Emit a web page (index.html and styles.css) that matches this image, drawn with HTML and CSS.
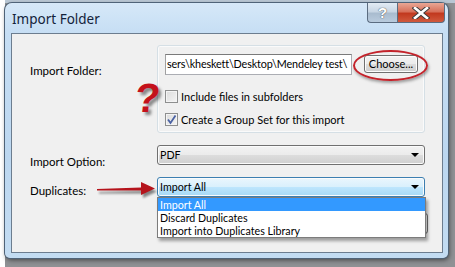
FILE: index.html
```html
<!DOCTYPE html>
<html>
<head>
<meta charset="utf-8">
<link rel="stylesheet" href="styles.css">
</head>
<body>
<div class="desk">
  <div class="window">
    <div class="titlebar">
      <span class="title">Import Folder</span>
      <div class="caption-btns">
        <div class="cbtn help">?</div>
        <div class="cbtn close">
          <svg width="18" height="12" viewBox="0 0 18 12"><path d="M3 1 L15 11 M15 1 L3 11" stroke="#3a3a3a" stroke-width="4.5" stroke-linecap="square"/><path d="M3 1 L15 11 M15 1 L3 11" stroke="#fff" stroke-width="2.6" stroke-linecap="square"/></svg>
        </div>
      </div>
    </div>
    <div class="client">
      <div class="row row-folder">
        <div class="label lbl-folder">Import Folder:</div>
        <div class="group">
          <span class="qmark">?</span>
          <div class="path-row">
            <div class="field">sers\kheskett\Desktop\Mendeley test\</div>
            <div class="choose-wrap">
              <div class="btn choose">Choose...</div>
              <div class="ring"></div>
            </div>
          </div>
          <label class="check first"><span class="box"></span>Include files in subfolders</label>
          <label class="check second"><span class="box checked"><svg width="11" height="11" viewBox="0 0 11 11"><path d="M2 5.5 L4.5 9 L9.5 1.5" fill="none" stroke="#4b62a3" stroke-width="1.8"/></svg></span>Create a Group Set for this import</label>
        </div>
      </div>
      <div class="row row-option">
        <div class="label lbl-option">Import Option:</div>
        <div class="combo"><span>PDF</span><span class="arrow"></span></div>
      </div>
      <div class="row row-dup">
        <div class="label lbl-dup">Duplicates:</div>
        <div class="combo active"><span>Import All</span><span class="arrow"></span>
          <svg class="red-arrow" width="64" height="22" viewBox="0 0 64 22"><defs><filter id="sh" x="-10%" y="-30%" width="130%" height="180%"><feGaussianBlur stdDeviation="1.2"/></filter></defs><g transform="translate(2,3)" opacity="0.45" filter="url(#sh)"><path d="M0 10 L44 8.5 L44 3 L58 9.5 L44 16 L44 11.5 L0 11.5 Z" fill="#000"/></g><path d="M0 10 L44 8.5 L44 3 L58 9.5 L44 16 L44 11.5 L0 11.5 Z" fill="#b5141c"/></svg>
          <ul class="list">
            <li class="sel">Import All</li>
            <li>Discard Duplicates</li>
            <li>Import into Duplicates Library</li>
          </ul>
        </div>
      </div>
      <div class="row row-buttons">
        <div class="btn ok"></div>
      </div>
    </div>
  </div>
</div>
</body>
</html>
```

FILE: styles.css
```css
html, body {
  margin: 0;
  padding: 0;
}
body {
  width: 455px;
  height: 267px;
  overflow: hidden;
  background: linear-gradient(to right, #ffffff 0 5px, transparent 5px), linear-gradient(to bottom, #b9c7d4 0 3px, #8f9194 3px);
  font-family: Lato, "Noto Sans", sans-serif;
  font-size: 11.5px;
  color: #000;
}
.desk {
  padding: 3px 0 0 5px;
}
.window {
  width: 443px;
  height: 255px;
  box-sizing: border-box;
  padding: 0 5px 5px 6px;
  border-radius: 7px 7px 5px 5px;
  background: linear-gradient(to bottom, #d6e8f8 0, #c6def4 30px, #bcd7f0 60%, #c3dcf2 100%);
  box-shadow: 0 0 0 1px #4f6378, 1px 2px 5px rgba(0,0,0,0.55);
  display: flex;
  flex-direction: column;
}
.titlebar {
  height: 30px;
  display: flex;
  justify-content: space-between;
  align-items: flex-start;
  flex: none;
}
.title {
  font-family: "Noto Sans", sans-serif;
  font-size: 13.5px;
  color: #13223a;
  padding: 7px 0 0 1px;
  line-height: 18px;
}
.caption-btns {
  display: flex;
  margin-right: -2px;
}
.cbtn {
  height: 20px;
  box-sizing: border-box;
  border: 1px solid #5b6c80;
  border-top: none;
  display: flex;
  align-items: center;
  justify-content: center;
}
.help {
  width: 30px;
  border-radius: 0 0 0 4px;
  border-right: none;
  background: linear-gradient(to bottom, #e2ebf4 0, #c8d6e4 45%, #a9bccf 55%, #b9cbdd 100%);
  color: #fff;
  font-family: "Liberation Sans", sans-serif;
  font-weight: bold;
  font-size: 15px;
  text-shadow: 0 0 1px #555, 0 0 1px #555;
}
.close {
  width: 48px;
  border-radius: 0 0 4px 0;
  background: linear-gradient(to bottom, #e9a795 0, #d7715b 45%, #c2391f 55%, #d0593d 100%);
}
.client {
  flex: 1;
  background: #f0f0f0;
  border: 1px solid #6c7d8f;
  padding: 11px 17px 0 18px;
  position: relative;
}
.row {
  display: flex;
  align-items: flex-start;
}
.label {
  width: 127px;
  flex: none;
  line-height: 16px;
  color: #000;
}
.lbl-folder { padding-top: 18px; }
.lbl-option { padding-top: 9px; margin-bottom: -5px; }
.lbl-dup { padding-top: 6px; margin-bottom: -2px; }
.group {
  width: 268px;
  box-sizing: border-box;
  border: 1px solid #d5dfe5;
  border-radius: 3px;
  box-shadow: inset 0 0 0 1px #fafafa;
  padding: 8px 6px 6px 7px;
  position: relative;
}
.qmark {
  position: absolute;
  left: -23px;
  top: 34px;
  font-family: "Liberation Sans", sans-serif;
  font-weight: bold;
  font-size: 41px;
  line-height: 36px;
  color: #c4111b;
  transform: skewX(-6deg);
  text-shadow: 3px 3px 3px rgba(0,0,0,0.45);
}
.path-row {
  display: flex;
  align-items: flex-start;
  gap: 12px;
}
.field {
  width: 187px;
  height: 21px;
  flex: none;
  box-sizing: border-box;
  background: #fff;
  border: 1px solid #abadb3;
  border-top-color: #7a7a7a;
  border-left-color: #a0a0a0;
  line-height: 18px;
  padding-left: 1px;
  font-size: 10.8px;
  letter-spacing: -0.15px;
  white-space: nowrap;
  overflow: hidden;
}
.choose-wrap {
  position: relative;
  margin-top: 1px;
}
.btn {
  box-sizing: border-box;
  border: 1px solid #707070;
  border-radius: 3px;
  background: linear-gradient(to bottom, #f2f2f2 0, #ebebeb 50%, #dddddd 50%, #cfcfcf 100%);
  box-shadow: inset 0 0 0 1px #fcfcfc;
  text-align: center;
}
.choose {
  width: 54px;
  height: 18px;
  line-height: 16px;
  font-size: 11px;
}
.ring {
  position: absolute;
  left: -11px;
  top: -5px;
  width: 75px;
  height: 31px;
  box-sizing: border-box;
  border: 2px solid #c3232b;
  border-radius: 50%;
  box-shadow: 1px 2px 3px rgba(0,0,0,0.35);
}
.check {
  display: flex;
  align-items: center;
  height: 13px;
  line-height: 13px;
  font-size: 11px;
}
.check.first { margin-top: 15px; }
.check.second { margin-top: 10px; }
.box {
  width: 13px;
  height: 13px;
  box-sizing: border-box;
  border: 1px solid #8e8f8f;
  background: linear-gradient(135deg, #dcdcdc 0, #f4f4f4 100%);
  box-shadow: inset 0 0 0 1px #f4f4f4;
  margin-right: 3px;
  flex: none;
  display: flex;
  align-items: center;
  justify-content: center;
}
.row-option { margin-top: 12px; }
.row-dup { margin-top: 12px; }
.combo {
  width: 268px;
  height: 20px;
  box-sizing: border-box;
  border: 1px solid #707070;
  border-radius: 3px;
  background: linear-gradient(to bottom, #f2f2f2 0, #ebebeb 50%, #dddddd 50%, #cfcfcf 100%);
  box-shadow: inset 0 0 0 1px #fbfbfb;
  display: flex;
  align-items: center;
  justify-content: space-between;
  padding: 0 5px 0 2px;
  line-height: 16px;
  font-size: 10.7px;
  position: relative;
}
.combo.active {
  border-color: #3c7fb1;
  background: linear-gradient(to bottom, #eaf6fd 0, #d9f0fc 50%, #bee6fd 50%, #a7d9f5 100%);
  z-index: 2;
}
.arrow {
  width: 0;
  height: 0;
  border-left: 4px solid transparent;
  border-right: 4px solid transparent;
  border-top: 4px solid #000;
}
.red-arrow {
  position: absolute;
  left: -61px;
  top: 1px;
}
.list {
  position: absolute;
  left: -1px;
  top: 19px;
  width: 269px;
  box-sizing: border-box;
  margin: 0;
  padding: 0;
  list-style: none;
  background: #fff;
  border: 1px solid #7c7c7c;
  box-shadow: 2px 3px 3px rgba(0,0,0,0.35);
}
.list li {
  height: 13px;
  line-height: 13px;
  padding-left: 2px;
  white-space: nowrap;
  font-size: 10.7px;
}
.list li.sel {
  background: #3399ff;
  color: #fff;
}
.row-buttons {
  margin-top: 16px;
  justify-content: flex-end;
  margin-right: -3px;
}
.ok {
  width: 75px;
  height: 21px;
}
```
